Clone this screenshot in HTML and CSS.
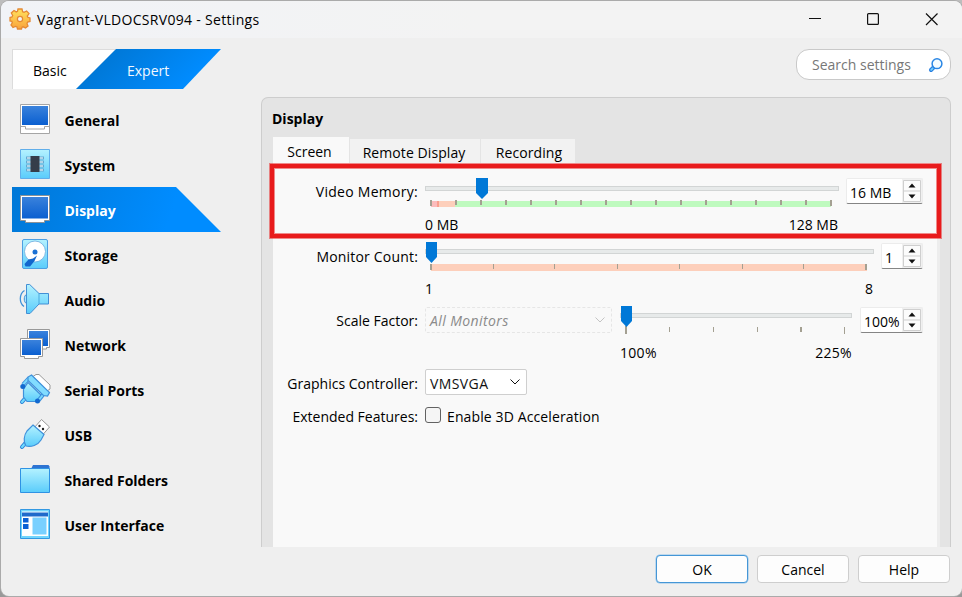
FILE: index.html
```html
<!DOCTYPE html>
<html lang="en">
<head>
<meta charset="utf-8">
<title>Vagrant-VLDOCSRV094 - Settings</title>
<link rel="stylesheet" href="styles.css">
</head>
<body>
<svg class="defs" width="0" height="0" aria-hidden="true">
  <defs>
    <linearGradient id="screen" x1="0" y1="0" x2="0" y2="1"><stop offset="0" stop-color="#3a82dc"/><stop offset="1" stop-color="#0a5fd0"/></linearGradient>
    <linearGradient id="aqua" x1="0" y1="0" x2="0" y2="1"><stop offset="0" stop-color="#b4f2ff"/><stop offset="1" stop-color="#5accfb"/></linearGradient>
    <linearGradient id="gold" x1="0" y1="0" x2="0" y2="1"><stop offset="0" stop-color="#ffe35c"/><stop offset="1" stop-color="#f9a23c"/></linearGradient>
  </defs>
</svg>
<div class="window">
  <header class="titlebar">
    <svg class="gear" width="22" height="22" viewBox="0 0 22 22"><path d="M9 1h4l.6 2.700 1.500.600L17.600 3 20 5.600 18.300 8l.5 1.300L21 10v3.500l-2.400.600-.6 1.500L19 18l-2.500 2-2.300-1.200-1.200.400L12.500 21h-4L8 19l-1.600-.600L4 19.500 2 17l1.300-2.200-.5-1.400L1 13V9.500L3 9l.7-1.500L2.300 5 5 2.500l2.200 1.400L8.500 3.300z" fill="url(#gold)" stroke="#e58a34" stroke-width="1.300"/><circle cx="11" cy="11" r="2.600" fill="#f3f4f6" stroke="#e58a34" stroke-width="1.200"/></svg>
    <h1 class="title">Vagrant-VLDOCSRV094 - Settings</h1>
    <svg class="caption" width="132" height="16" viewBox="0 0 132 16" fill="none" stroke="#111" stroke-width="1.200"><path d="M0 8.500h12"/><rect x="58.600" y="3.600" width="10.800" height="10.800" rx="1"/><path d="M117 3.500l11.500 11.500M128.500 3.500L117 15"/></svg>
  </header>
  <div class="toolbar">
    <div class="modes">
      <span class="mode basic">Basic</span>
      <span class="mode expert">Expert</span>
    </div>
    <div class="search"><span>Search settings</span>
      <svg width="16" height="16" viewBox="0 0 16 16"><path d="M3 13l3-3" stroke="#2a7fe0" stroke-width="4" stroke-linecap="round"/><path d="M3.200 12.800l1.500-1.500" stroke="#6fd0ff" stroke-width="1.800" stroke-linecap="round"/><circle cx="9" cy="6.700" r="4.900" fill="#f4fcff" stroke="#2a86e4" stroke-width="1.500"/></svg>
    </div>
  </div>
  <div class="main">
    <nav class="nav">
      <a class="item"><svg class="ico" viewBox="0 0 32 32"><path d="M1.500 1.500h29v29h-29z" fill="#fff" stroke="#a5a5a5"/><path d="M2 23.500h4.500v2.500h19v-2.500H30" stroke="#a5a5a5" fill="none"/><path d="M3 3h26v19H3z" fill="url(#screen)"/></svg><span>General</span></a>
      <a class="item"><svg class="ico" viewBox="0 0 32 32"><path d="M1.500 1.500h29v29h-29z" fill="url(#aqua)" stroke="#61aeea"/><path d="M7 10h18M7 14h18M7 18h18M7 22h18" stroke="#64a8d0" stroke-width="3"/><path d="M8 10h16M8 14h16M8 18h16M8 22h16" stroke="#fff" stroke-width="1.200"/><path d="M11.500 8h9v16h-9z" fill="#353d4a"/></svg><span>System</span></a>
      <a class="item active"><svg class="ico" viewBox="0 0 32 32"><path d="M1.500 2.500h29v25h-5v2h-19v-2h-5z" fill="#fff" stroke="#8c9297"/><path d="M3 4h26v21.500H3z" fill="url(#screen)"/></svg><span>Display</span></a>
      <a class="item"><svg class="ico" viewBox="0 0 32 32"><rect x="3.500" y="1.500" width="25" height="29" rx="1.500" fill="url(#aqua)" stroke="#4d9fe2"/><circle cx="16" cy="13.500" r="10.500" fill="#fff" stroke="#6aa9dc" stroke-width=".8"/><circle cx="16" cy="14" r="2.500" fill="#1a70d4"/><path d="M18 17.500l-2.500 5.500-4.500 5.500H6.500L5.500 26l4-4.500 4.500-1z" fill="#1266cd"/></svg><span>Storage</span></a>
      <a class="item"><svg class="ico" viewBox="0 0 32 32"><path d="M7.500 11.500c-3 1-3 8 0 9z" fill="#a7e6fc" stroke="#3e90d8"/><path d="M5.500 7.500C0 11 0 20 5 23.500" stroke="#3e90d8" stroke-width="1.300" fill="none"/><path d="M7.500 1.500h3.200l9.300 9h9.500v10.500H20L11 30.500H7.500z" fill="url(#aqua)" stroke="#438fd5"/><path d="M20 10.500v10.500" stroke="#4aa9df"/></svg><span>Audio</span></a>
      <a class="item"><svg class="ico" viewBox="0 0 32 32"><path d="M8.500 1.500h22v18h-3v1.500H8.500z" fill="#fff" stroke="#999"/><path d="M10 3h19v15H10z" fill="url(#screen)"/><path d="M1.500 10.500h22v18h-4v2h-14v-2h-4z" fill="#fff" stroke="#999"/><path d="M3 12h19v15H3z" fill="url(#screen)"/></svg><span>Network</span></a>
      <a class="item"><svg class="ico" viewBox="0 0 32 32"><path d="M14 3.500L17 1.500h3L31 12v4l-3 2z" fill="#fff" stroke="#999"/><path d="M6.500 25L3 29" stroke="#2a82d8" stroke-width="4" stroke-linecap="round"/><path d="M6.500 25L3 29" stroke="#70dbff" stroke-width="2" stroke-linecap="round"/><path d="M9 9.500l13 12.500-1.500 4.500-4.500 2H8l-3.500-4.500V16z" fill="url(#aqua)" stroke="#3f91db" stroke-width="1.200"/><path d="M10 5L4 11.500M25 20.500l-5.500 7" stroke="#3f91db" stroke-width="4"/><path d="M10 5L4 11.500M25 20.500l-5.500 7" stroke="#79d8ff" stroke-width="2"/><path d="M12.500 2L30.500 19.500l-2 3.500-4-.5L9 7.500V4z" fill="#82dcff" stroke="#3f91db" stroke-width="1.200"/><circle cx="3.800" cy="13.500" r="2.500" fill="#1269d0"/><circle cx="18.500" cy="28" r="2.500" fill="#1269d0"/></svg><span>Serial Ports</span></a>
      <a class="item"><svg class="ico" viewBox="0 0 32 32"><path d="M22.500 1.500l8 7.500-7 8-8.500-7z" fill="#fff" stroke="#999"/><circle cx="20.500" cy="8" r="1.200" fill="#222"/><circle cx="24" cy="11" r="1.200" fill="#222"/><path d="M6 25.500L3 29" stroke="#2a82d8" stroke-width="4" stroke-linecap="round"/><path d="M6 25.500L3 29" stroke="#70dbff" stroke-width="2" stroke-linecap="round"/><path d="M14 7l11 9.500-3 5.500c-3 5-10 7.500-15 6-3-4-2-11 1-15z" fill="url(#aqua)" stroke="#3f91db" stroke-width="1.200"/></svg><span>USB</span></a>
      <a class="item"><svg class="ico" viewBox="0 0 32 32"><path d="M12 6l2-4h15.500l1 1.500V8H12z" fill="#2e74d2"/><path d="M1.500 5.500h29v24h-29z" fill="url(#aqua)" stroke="#2f92e4"/></svg><span>Shared Folders</span></a>
      <a class="item"><svg class="ico" viewBox="0 0 32 32"><path d="M1.500 1.500h29v29h-29z" fill="#72d5fc" stroke="#3298e2"/><path d="M3 3.500h26V28H3z" fill="#fff"/><path d="M3 4.500h26v4H3z" fill="#1f6acb"/><path d="M4 10h5.500v4.500H4zM4 16h5.500v5H4z" fill="#0a60d4"/><path d="M13.500 9.500h14v17h-14z" fill="#79d0ff"/></svg><span>User Interface</span></a>
    </nav>
    <section class="panel">
      <h2 class="heading">Display</h2>
      <div class="tabs"><span class="tab selected">Screen</span><span class="tab remote">Remote Display</span><span class="tab recording">Recording</span></div>
      <div class="page">
        <div class="row first">
          <label class="name wide">Video Memory:</label>
          <div class="slider video">
            <svg width="414" height="37" viewBox="0 0 414 37" shape-rendering="crispEdges"><path d="M.5 8.500h413v4H.5z" fill="#e7eaea" stroke="#d2d5d5"/><path d="M6 23h24v6H6z" fill="#fdcfbb"/><path d="M6 23h6v6H6z" fill="#fcbcbc"/><path d="M12 23h2v6h-2z" fill="#fa9f8f"/><path d="M30 23h376v6H30z" fill="#bffabf"/><path d="M5 22h2v6H5zM30 22h2v5h-2zM55 22h2v5h-2zM80 22h2v5h-2zM105 22h2v5h-2zM130 22h2v5h-2zM155 22h2v5h-2zM180 22h2v5h-2zM205 22h2v5h-2zM230 22h2v5h-2zM255 22h2v5h-2zM280 22h2v5h-2zM305 22h2v5h-2zM330 22h2v5h-2zM355 22h2v5h-2zM380 22h2v5h-2zM405 22h2v6h-2z" fill="#a4a092"/><path d="M51 0h12v15l-6 6-6-6z" fill="#0078d7" shape-rendering="auto"/></svg>
            <div class="range"><span>0 MB</span><span>128 MB</span></div>
          </div>
          <div class="spin s77"><span>16 MB</span><svg width="18" height="22" viewBox="0 0 18 22"><path d="M.5.500h17v21H.5zM.5 11h17" fill="#fcfcfc" stroke="#cfcfcf"/><path d="M5.500 7.500L9 3.500l3.500 4zM5.500 14.500h7L9 18.500z" fill="#111"/></svg></div>
        </div>
        <div class="row">
          <label class="name wide">Monitor Count:</label>
          <div class="slider">
            <svg width="449" height="37" viewBox="0 0 449 37" shape-rendering="crispEdges"><path d="M.5 7.500h448v4H.5z" fill="#e7eaea" stroke="#d2d5d5"/><path d="M6 22h436v7H6z" fill="#fdcfbb"/><path d="M5 22h2v6H5zM68 22h1v5h-1zM129 22h1v5h-1zM192 22h1v5h-1zM254 22h1v5h-1zM317 22h1v5h-1zM378 22h1v5h-1zM440 22h2v6h-2z" fill="#a4a092"/><path d="M1 0h11v15l-5.500 6L1 15z" fill="#0078d7" shape-rendering="auto"/></svg>
            <div class="range"><span>1</span><span>8</span></div>
          </div>
          <div class="spin s42"><span>1</span><svg width="18" height="22" viewBox="0 0 18 22"><path d="M.5.500h17v21H.5zM.5 11h17" fill="#fcfcfc" stroke="#cfcfcf"/><path d="M5.500 7.500L9 3.500l3.500 4zM5.500 14.500h7L9 18.500z" fill="#111"/></svg></div>
        </div>
        <div class="row scale">
          <label class="name">Scale Factor:</label>
          <div class="combo disabled"><span>All Monitors</span><svg width="12" height="8" viewBox="0 0 12 8"><path d="M1.500 1.500L6 6l4.500-4.500" fill="none" stroke="currentColor"/></svg></div>
          <div class="slider factor">
            <svg width="232" height="36" viewBox="0 0 232 36" shape-rendering="crispEdges"><path d="M.5 7.500h231v4H.5z" fill="#e7eaea" stroke="#d2d5d5"/><path d="M5 20h2v8H5zM49 21h1v5h-1zM93 21h1v5h-1zM137 21h1v5h-1zM180 21h2v5h-2zM224 21h1v7h-1z" fill="#a4a092"/><path d="M1 0h11v15l-5.500 6L1 15z" fill="#0078d7" shape-rendering="auto"/></svg>
            <div class="range"><span>100%</span><span>225%</span></div>
          </div>
          <div class="spin s63"><span>100%</span><svg width="18" height="22" viewBox="0 0 18 22"><path d="M.5.500h17v21H.5zM.5 11h17" fill="#fcfcfc" stroke="#cfcfcf"/><path d="M5.500 7.500L9 3.500l3.500 4zM5.500 14.500h7L9 18.500z" fill="#111"/></svg></div>
        </div>
        <div class="row short">
          <label class="name">Graphics Controller:</label>
          <div class="combo"><span>VMSVGA</span><svg width="12" height="8" viewBox="0 0 12 8"><path d="M1.500 1.500L6 6l4.500-4.500" fill="none" stroke="currentColor"/></svg></div>
        </div>
        <div class="row short">
          <label class="name">Extended Features:</label>
          <span class="check"></span><span class="check-label">Enable 3D Acceleration</span>
        </div>
      </div>
      <div class="highlight"></div>
    </section>
  </div>
  <footer class="actions"><button class="btn primary">OK</button><button class="btn">Cancel</button><button class="btn">Help</button></footer>
</div>
</body>
</html>
```

FILE: styles.css
```css
* { box-sizing: border-box; }
body {
  margin: 0;
  width: 962px;
  height: 597px;
  padding: 1px 0 1px 1px;
  overflow: hidden;
  background: linear-gradient(#bdbdbd 0 38px, #6683b0 38px 54px, #aaa 54px 96px, #55565d 96px 130px, #aaa 130px 175px, #55565d 175px 200px, #aaa 200px 235px, #55565d 235px 275px, #75a8cf 275px 305px, #55565d 305px 345px, #75a8cf 345px 400px, #aaa 400px 470px, #55565d 470px 555px, #999 555px);
  font-family: "Open Sans", "Noto Sans", sans-serif;
  font-size: 14px;
  color: #000;
}
.defs { position: absolute; }
.window {
  display: flex;
  flex-direction: column;
  height: 595px;
  border-radius: 8px;
  background: #efefef;
  overflow: hidden;
  box-shadow: 0 0 0 1px #aaa;
}
.titlebar {
  display: flex;
  align-items: center;
  height: 37px;
  padding: 0 21px 0 8px;
  background: linear-gradient(90deg, #f1f3f7, #f3f3f3 50%);
}
.gear { margin-top: -1px; }
.caption { margin-top: -3px; }
.title {
  flex: 1;
  margin: 0 0 0 6px;
  font-size: 14px;
  font-weight: 400;
  letter-spacing: .31px;
}
.toolbar {
  display: flex;
  justify-content: space-between;
  height: 59px;
  padding: 11px 11px 0 11px;
}
.modes {
  display: flex;
  width: 209px;
  height: 40px;
  line-height: 43px;
}
.mode.basic {
  width: 104px;
  padding-left: 20px;
  background: #fff;
  border: solid #dcdcdc;
  border-width: 1px 0 0 1px;
  line-height: 41px;
  clip-path: polygon(0 0, 100% 0, 64px 100%, 0 100%);
}
.mode.expert {
  flex: none;
  width: 145px;
  margin-left: -40px;
  padding-left: 51px;
  color: #f2f8ff;
  background: linear-gradient(135deg, #0078d7 20%, #008cff 80%);
  clip-path: polygon(40px 0, 100% 0, 107px 100%, 0 100%);
}
.search {
  display: flex;
  align-items: center;
  justify-content: space-between;
  width: 155px;
  height: 31px;
  padding: 0 6px 0 15px;
  border: 1px solid #c9c9c9;
  border-radius: 13px;
  background: #fff;
  color: #777;
}
.main { display: flex; height: 450px; }
.nav { width: 209px; margin-left: 11px; }
.item {
  display: flex;
  align-items: center;
  height: 45px;
  padding-left: 7px;
  font-weight: 700;
}
.item span { margin: 2px 0 0 13.5px; }
.ico { width: 32px; height: 32px; margin-top: -2px; }
.item.active {
  color: #fff;
  background: linear-gradient(110deg, #0078d7, #008cff 75%);
  clip-path: polygon(0 0, 164px 0, 100% 100%, 0 100%);
}
.panel {
  position: relative;
  display: flex;
  flex-direction: column;
  width: 690px;
  margin-left: 40px;
  padding: 0 10px 0 11px;
  border: 1px solid #cdcdcd;
  border-bottom: 0;
  border-radius: 7px 7px 0 0;
  background: #e4e4e4;
}
.heading {
  height: 39px;
  margin: 0 0 0 -1px;
  padding-top: 11px;
  font-size: 14px;
  line-height: 20px;
}
.tabs { display: flex; align-items: flex-end; height: 26px; }
.tab {
  height: 24px;
  line-height: 27px;
  text-align: center;
  background: #f2f2f2;
  border-right: 1px solid #e4e4e4;
}
.tab.selected { width: 77px; height: 26px; line-height: 29px; padding-right: 3px; background: #f9f9f9; }
.tab.remote { width: 131px; padding-right: 2px; letter-spacing: .08px; }
.tab.recording { width: 95px; padding-left: 2px; letter-spacing: .1px; }
.page {
  flex: 1;
  padding-top: 15px;
  background: #f9f9f9;
  border-right: 3px solid #ededed;
}
.row { display: flex; align-items: flex-start; height: 64px; }
.row.scale { height: 63px; }
.row.short { height: 33px; }
.name {
  width: 145px;
  margin-right: 7px;
  line-height: 30px;
  text-align: right;
  white-space: nowrap;
}
.name.wide { letter-spacing: .18px; }
.first .name { line-height: 28px; letter-spacing: .27px; }
.slider { margin-right: 7px; }
.slider svg { display: block; }
.range { display: flex; justify-content: space-between; line-height: 20px; padding-right: 1px; }
.slider.factor { margin: 0 8px; }
.factor .range { padding: 1px 0 0; letter-spacing: .3px; }
.spin {
  display: flex;
  align-items: center;
  justify-content: space-between;
  height: 26px;
  margin-top: 1px;
  padding: 0 1px 0 3px;
  border: 1px solid #ececec;
  border-bottom-color: #858585;
  border-radius: 2px;
  background: linear-gradient(270deg, #f0f0f0 20px, #fff 20px);
  white-space: nowrap;
}
.spin span { padding-top: 2px; }
.s77 { width: 77px; margin-top: 0; }
.s42 { width: 42px; }
.s63 { width: 63px; }
.combo {
  display: flex;
  align-items: center;
  justify-content: space-between;
  width: 102px;
  height: 26px;
  padding: 0 5px 0 4px;
  border: 1px solid #cfcfcf;
  border-radius: 2px;
  background: #fff;
  color: #111;
}
.combo span { padding-top: 2px; letter-spacing: .4px; }
.combo.disabled {
  width: 187px;
  margin-top: 1px;
  border: 1px dashed #e6e6e6;
  background: transparent;
  color: #8b8b8b;
  font-style: italic;
}
.combo.disabled span { padding-top: 1px; }
.combo.disabled svg { color: #c4c4c4; }
.check {
  width: 16px;
  height: 16px;
  margin: 5px 6px 0 0;
  border: 1px solid #626262;
  border-radius: 3px;
  background: #f5f5f5;
}
.check-label { line-height: 30px; letter-spacing: .12px; }
.highlight {
  position: absolute;
  left: 8px;
  top: 66px;
  width: 671px;
  height: 74px;
  border: 4px solid #e81b1c;
  box-shadow: 0 0 0 1px rgba(232, 27, 28, .5), inset 0 0 0 1px rgba(232, 27, 28, .5);
}
.actions { display: flex; gap: 9px; justify-content: flex-end; padding: 8px 12px 0 0; }
.btn {
  width: 92px;
  height: 28px;
  padding: 1px 0 0;
  border: 1px solid #cecece;
  border-radius: 4px;
  background: #fdfdfd;
  color: #000;
  font: inherit;
}
.btn.primary { border-color: #4596d6; box-shadow: 0 0 0 .5px #8fc4ec; }
```
